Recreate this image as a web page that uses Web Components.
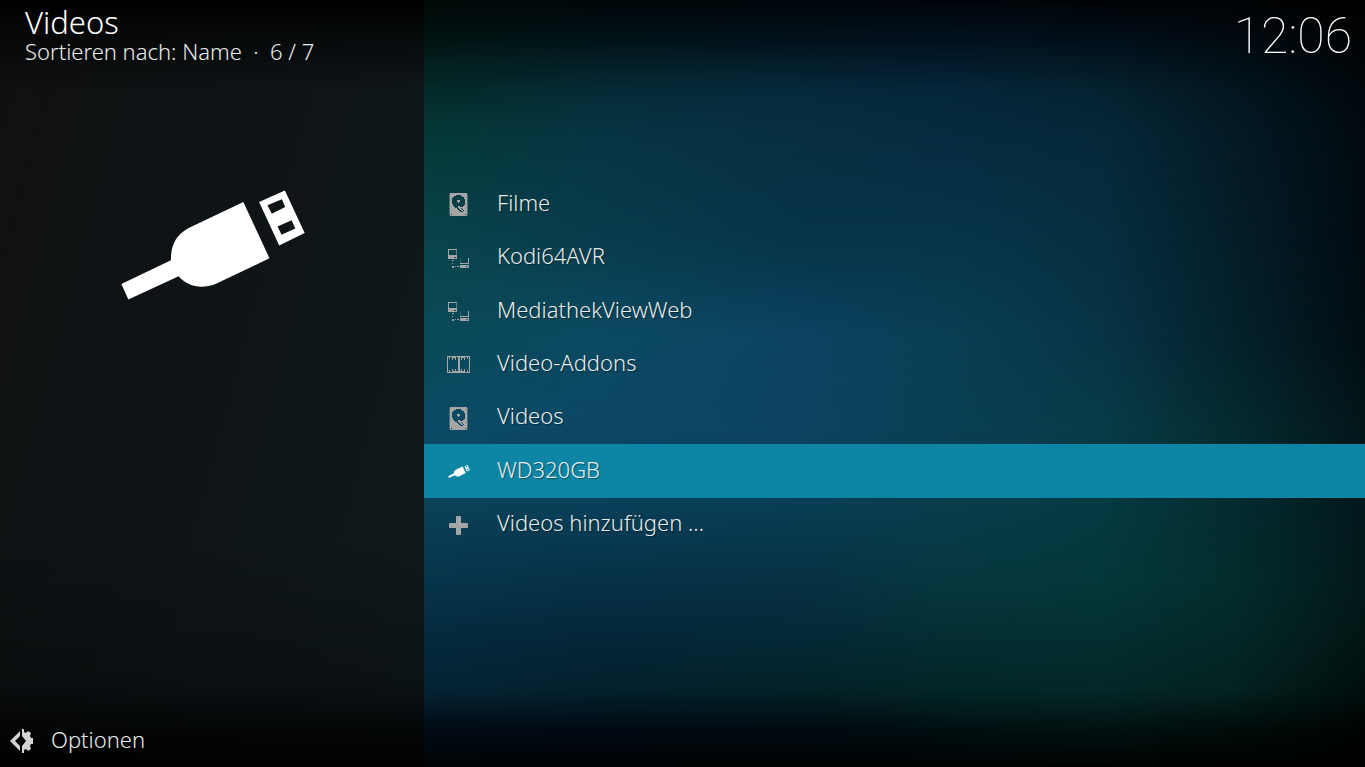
<!DOCTYPE html>
<html lang="de">
<head>
<meta charset="utf-8">
<meta name="viewport" content="width=device-width, initial-scale=1">
<title>Videos</title>
<style>
  html, body { margin: 0; min-height: 100%; background: #000; }
  body { font-family: "Noto Sans", sans-serif; font-weight: 300; color: #e8ecec; }
</style>
</head>
<body>
<media-window>
  <window-heading slot="side" heading="Videos">Sortieren nach: Name &nbsp;·&nbsp; 6 / 7</window-heading>
  <media-icon slot="side" name="usb" size="large"></media-icon>
  <options-button slot="side">Optionen</options-button>
  <wall-clock slot="main">12:06</wall-clock>
  <media-list slot="main">
    <media-item icon="disk">Filme</media-item>
    <media-item icon="network">Kodi64AVR</media-item>
    <media-item icon="network">MediathekViewWeb</media-item>
    <media-item icon="film">Video-Addons</media-item>
    <media-item icon="disk">Videos</media-item>
    <media-item icon="usb" selected>WD320GB</media-item>
    <media-item icon="plus">Videos hinzufügen ...</media-item>
  </media-list>
</media-window>

<script>
const define = (name, html, setup) => {
  const template = document.createElement('template');
  template.innerHTML = html;
  customElements.define(name, class extends HTMLElement {
    constructor() {
      super();
      this.attachShadow({ mode: 'open' }).append(template.content.cloneNode(true));
    }
    connectedCallback() { if (setup) setup(this, this.shadowRoot); }
  });
};

const usbShape = `
  <path d="M67 342 215 271C214 228 230 195 268 175L431 97 509 265 348 342C305 358 265 350 238 319L88 388Z"/>
  <path fill-rule="evenodd" d="M478 97 555 63 614 190 538 227ZM503 107 516 132 556 112 546 89ZM533 170 545 195 586 176 575 152Z"/>`;

const icons = {
  usb: `<svg viewBox="40 62 575 327" width="23" height="13" fill="#fff">${usbShape}</svg>`,
  usbLarge: `<svg viewBox="66 62 549 327" width="184" height="110" fill="#fff">${usbShape}</svg>`,
  disk: `<svg viewBox="0 0 19 23" width="19" height="23" shape-rendering="crispEdges" fill="#a5a5a5">
    <path fill-rule="evenodd" d="M1 0H18V23H1ZM7 2V3H5V4H4V5H3V11H4V13H5V14H6V15H8V16H9V17H10V18H11V19H14V18H15V17H14V16H13V15H12V14H14V13H15V12H16V6H15V4H13V3H12V2ZM2 21V22H3V21ZM16 21V22H17V21Z"/>
    <path d="M8 7H11V9H10V10H9V9H8ZM9 13H11V14H12V16H13V17H14V18H12V17H11V16H10V15H9Z"/>
    <path fill="#4a7077" d="M0 1H1V22H0ZM18 1H19V22H18Z"/></svg>`,
  network: `<svg viewBox="-1 0 23 19" width="23" height="19" shape-rendering="crispEdges" fill="#a5a5a5">
    <path fill-rule="evenodd" d="M0 0H9V1H1V6H9V10H0ZM6 8V9H8V8Z"/>
    <path fill="#5a7a82" d="M8 1H9V6H8Z"/>
    <path fill="#2c606b" d="M12 9H13V14H12Z"/>
    <path d="M4 11H6V12H4ZM4 14H5V15H4ZM4 17H6V19H4ZM7 17H8V18H7ZM9 17H11V18H9ZM20 9H21V15H12V14H20ZM12 16H21V19H12Z"/>
    <path fill="#285d67" d="M18 17H20V18H18Z"/></svg>`,
  film: `<svg viewBox="0 0 23 17" width="23" height="17" shape-rendering="crispEdges" fill="#a5a5a5">
    <path fill-rule="evenodd" d="M0 0H23V17H0ZM1 1V16H2V14H3V16H5V13H6V15H8V13H9V15H11V1H9V4H8V2H6V4H5V1H3V3H2V1ZM13 1V15H14V13H15V15H17V13H18V16H20V14H21V16H22V1H21V3H20V1H18V4H17V2H15V4H14V1Z"/></svg>`,
  plus: `<svg viewBox="0 0 19 19" width="19" height="19" fill="#a5a5a5">
    <path d="M8 0H11Q12 0 12 1V7H18Q19 7 19 8V11Q19 12 18 12H12V18Q12 19 11 19H8Q7 19 7 18V12H1Q0 12 0 11V8Q0 7 1 7H7V1Q7 0 8 0Z"/></svg>`,
  options: `<svg viewBox="0 0 23 24" width="23" height="24" fill="#d4d4d4">
    <path d="M10 2V7L5 12 10 17V22L0 12Z"/>
    <path d="M12 0H14V3L16 4 18 2 21 4 20 7 21 9H23V15H21L20 17 21 20 18 22 16 20 14 21V24H12V17L16 12 12 7Z"/></svg>`
};

define('media-icon', `
  <style>
    :host { display: grid; place-items: center; width: 24px; height: 24px; flex: none; }
    :host([size="large"]) { width: auto; height: auto; padding-left: 2px; }
    svg { display: block; }
  </style>`,
  (host, root) => {
    const key = host.getAttribute('name') + (host.getAttribute('size') === 'large' ? 'Large' : '');
    root.querySelector('svg')?.remove();
    root.append(document.createRange().createContextualFragment(icons[key]));
    root.querySelector('svg').setAttribute('aria-hidden', 'true');
  });

define('window-heading', `
  <style>
    :host { display: block; padding-left: 25px; }
    h1 { margin: 0; font-size: 31px; line-height: 34px; font-weight: 300; color: #fff; }
    p { margin: 0; font-size: 22px; line-height: 24px; white-space: nowrap; }
  </style>
  <h1></h1><p><slot></slot></p>`,
  (host, root) => { root.querySelector('h1').textContent = host.getAttribute('heading'); });

define('options-button', `
  <style>
    :host { display: block; margin-top: auto; padding: 0 9px 10px; }
    button { display: flex; align-items: center; gap: 18px; margin: 0; padding: 0; border: 0;
      background: none; color: inherit; font: inherit; font-size: 22px; line-height: 28px; }
    span { padding-bottom: 4px; }
  </style>
  <button type="button"><media-icon name="options"></media-icon><span><slot></slot></span></button>`);

define('wall-clock', `
  <style>
    :host { display: block; position: absolute; top: 6px; right: 13px;
      font: 100 50px/60px Roboto, sans-serif; color: #fff; }
  </style>
  <time datetime="12:06"><slot></slot></time>`);

define('media-list', `
  <style>
    :host { position: relative; display: grid; grid-auto-rows: 1fr; min-height: 374px; }
  </style>
  <slot></slot>`,
  host => host.setAttribute('role', 'list'));

define('media-item', `
  <style>
    :host { display: grid; }
    a { display: flex; align-items: center; gap: 27px; padding: 2px 0 0 22px; color: inherit;
      text-decoration: none; font-size: 22px; line-height: 32px; text-shadow: 1px 1px 1px #0006; }
    :host([selected]) a { background: #0f85a5; }
    span { padding-bottom: 6px; }
  </style>
  <a href="#"><span><slot></slot></span></a>`,
  (host, root) => {
    host.setAttribute('role', 'listitem');
    const link = root.querySelector('a');
    const icon = document.createElement('media-icon');
    icon.setAttribute('name', host.getAttribute('icon'));
    link.prepend(icon);
    if (host.hasAttribute('selected')) link.setAttribute('aria-current', 'true');
  });

// Colour mesh: each band is a horizontal gradient that fades in over the one above it.
const meshColumns = [0, 19, 40, 56, 72, 86, 100];
const meshRows = [
  [0, '#020807 #01070a #01060a #01050a #000406 #010304 #000000'],
  [5, '#021412 #021318 #02111b #02111e #020f1a #020a10 #010304'],
  [12, '#042b29 #062c38 #062a3d #05273b #052331 #03161f #01080d'],
  [18, '#053937 #073544 #082f42 #062b40 #06293a #041a26 #020b10'],
  [31, '#09444b #093c4d #073448 #073449 #062f40 #041e29 #020b12'],
  [44, '#0a4a58 #0b4a62 #0c4362 #0a3f54 #083446 #04222c #020e13'],
  [56, '#0b4a64 #0c4766 #0c4360 #0a3f54 #083c48 #052b30 #03161a'],
  [66, '#0a4258 #0a4059 #093e54 #093d4c #063a42 #042c30 #02181c'],
  [76, '#07344b #063047 #073042 #07373f #04373a #042d2d #02181a'],
  [83, '#052a3e #052739 #052a38 #042e33 #042f31 #042828 #021614'],
  [90, '#042434 #04202d #032127 #032627 #042828 #032220 #010f0d'],
  [95, '#020c16 #010b14 #010b11 #010f11 #021211 #010d0b #010303'],
  [100, '#000305 #000203 #000202 #000202 #000202 #000101 #000000']
];

define('colour-backdrop', `
  <style>
    :host { position: absolute; inset: 0; display: grid; }
    div { grid-area: 1 / 1; }
  </style>`,
  (host, root) => meshRows.forEach(([y, colours], i) => {
    const band = document.createElement('div');
    const stops = colours.split(' ').map((c, n) => `${c} ${meshColumns[n]}%`);
    band.style.background = `linear-gradient(90deg, ${stops})`;
    if (i) band.style.maskImage = `linear-gradient(transparent ${meshRows[i - 1][0]}%, #000 ${y}%)`;
    root.append(band);
  }));

define('media-window', `
  <style>
    :host { display: grid; grid-template-columns: 424px minmax(0, 1fr); min-height: 100vh; }
    aside { display: flex; flex-direction: column; gap: 127px; padding-top: 5px;
      background:
        linear-gradient(#000, #0009 4%, #0000 12%, #0000 89%, #000b 96%, #000),
        linear-gradient(#0000 70%, #0004 90%),
        linear-gradient(105deg, #101010, #0e1315 40%, #10191c); }
    main { position: relative; display: flex; flex-direction: column; justify-content: center;
      padding-bottom: 39px; }
  </style>
  <aside><slot name="side"></slot></aside>
  <main><colour-backdrop></colour-backdrop><slot name="main"></slot></main>`);
</script>
</body>
</html>
